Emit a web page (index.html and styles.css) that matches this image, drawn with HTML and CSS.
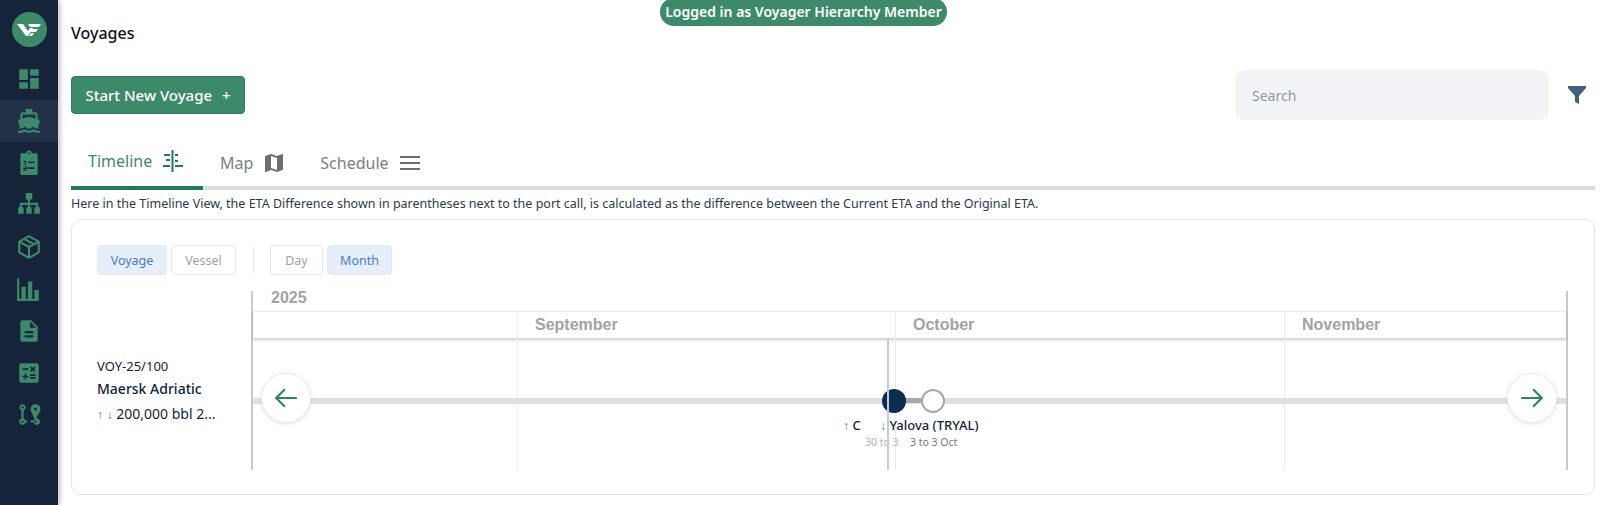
FILE: index.html
```html
<!DOCTYPE html>
<html lang="en">
<head>
  <meta charset="UTF-8">
  <title>Voyages</title>
  <link rel="stylesheet" href="styles.css">
</head>
<body>
  <nav class="sidebar">
    <div class="logo">
      <svg width="24" height="16" viewBox="0 0 24 16"><path fill="#fff" d="M0 2h6l5 7 2-3 3 0-5 8H9zM11 2h13l-2 3H13zM15 7h6l-2 3h-6zM14 11h3l-2 3h-3z"/></svg>
    </div>
    <a class="nav-item"><svg viewBox="0 0 24 24" width="26" height="26"><path d="M3 13h8V3H3v10zm0 8h8v-6H3v6zm10 0h8V11h-8v10zm0-18v6h8V3h-8z"/></svg></a>
    <a class="nav-item active"><svg viewBox="0 0 24 24" width="26" height="26"><path d="M20 21c-1.39 0-2.78-.47-4-1.32-2.44 1.71-5.56 1.71-8 0C6.78 20.53 5.39 21 4 21H2v2h2c1.38 0 2.74-.35 4-.99 2.52 1.29 5.48 1.29 8 0 1.26.65 2.62.99 4 .99h2v-2h-2zM3.95 19H4c1.6 0 3.02-.88 4-2 .98 1.12 2.4 2 4 2s3.02-.88 4-2c.98 1.12 2.4 2 4 2h.05l1.89-6.68c.08-.26.06-.54-.06-.78s-.34-.42-.6-.5L20 10.62V6c0-1.1-.9-2-2-2h-3V1H9v3H6c-1.1 0-2 .9-2 2v4.62l-1.29.42c-.26.08-.48.26-.6.5s-.15.52-.06.78L3.95 19zM6 6h12v3.97L12 8 6 9.97V6z"/></svg></a>
    <a class="nav-item"><svg viewBox="0 0 24 24" width="26" height="26"><path fill-rule="evenodd" d="M5 3h4.5a2.5 2.5 0 0 1 5 0H19a1 1 0 0 1 1 1v18a1 1 0 0 1-1 1H5a1 1 0 0 1-1-1V4a1 1 0 0 1 1-1zm6.2 0a.8.8 0 1 0 1.6 0 .8.8 0 0 0-1.6 0zM7 10v1h1v3h1v-4zm4 .5V12h6v-1.500zM7 15.500V16h2v.5H7V19h3v-1H8v-.5h2V15zm4 .5v1.500h6V16z"/></svg></a>
    <a class="nav-item"><svg viewBox="0 0 24 24" width="26" height="26"><path d="M9 1h6v6h-2v3h7.500v4H22v6h-5v-6h1.500v-2H13v2h1.500v6h-5v-6H11v-2H5.500v2H7v6H2v-6h1.500v-4H11V7H9z"/></svg></a>
    <a class="nav-item"><svg viewBox="0 0 24 24" width="26" height="26"><path fill="none" stroke="#3d8a6a" stroke-width="2" stroke-linejoin="round" d="M12 2l9 5v10l-9 5-9-5V7zM3 7l9 5 9-5M12 12v10M7.500 4.500l9 5"/></svg></a>
    <a class="nav-item"><svg viewBox="0 0 24 24" width="26" height="26"><path d="M1 2h2v19h2V10h4v11h2V5h4v16h2v-8h4v10H1z"/></svg></a>
    <a class="nav-item"><svg viewBox="0 0 24 24" width="26" height="26"><path d="M14 2H6c-1.100 0-2 .9-2 2v16c0 1.100.9 2 2 2h12c1.100 0 2-.9 2-2V8l-6-6zm2 16H8v-2h8v2zm0-4H8v-2h8v2zm-3-5V3.500L18.500 9H13z"/></svg></a>
    <a class="nav-item"><svg viewBox="0 0 24 24" width="26" height="26"><path d="M19 3H5c-1.100 0-2 .9-2 2v14c0 1.100.9 2 2 2h14c1.100 0 2-.9 2-2V5c0-1.100-.9-2-2-2zm-5.970 4.060L14.090 6l1.410 1.410L16.910 6l1.060 1.060-1.410 1.410 1.410 1.410-1.060 1.060-1.410-1.400-1.410 1.410-1.060-1.060 1.410-1.410-1.410-1.420zm-6.780.66h5v1.500h-5v-1.500zM11.500 16h-2v2H8v-2H6v-1.500h2v-2h1.500v2h2V16zm6.500 1.250h-5v-1.500h5v1.500zm0-2.500h-5v-1.500h5v1.500z"/></svg></a>
    <a class="nav-item"><svg viewBox="0 0 24 24" width="26" height="26"><path fill-rule="evenodd" d="M6 2a3 3 0 0 1 1 5.800V15.200A3 3 0 0 1 8.800 17h1.700v2H8.800A3 3 0 1 1 5 15.200V7.800A3 3 0 0 1 6 2zm0 2a1 1 0 1 0 0 2 1 1 0 0 0 0-2zm0 13a1 1 0 1 0 0 2 1 1 0 0 0 0-2zM18 2a4.500 4.500 0 0 1 4.500 4.500c0 3-3.200 6-3.500 8.700a3 3 0 1 1-2.800 3.800h-2.700v-2h2.700a3 3 0 0 1 .8-1.600C16.200 12.500 13.500 9.500 13.500 6.500A4.500 4.500 0 0 1 18 2zm0 3a1.500 1.500 0 1 0 0 3 1.500 1.500 0 0 0 0-3zm0 12a1 1 0 1 0 0 2 1 1 0 0 0 0-2z"/></svg></a>
  </nav>

  <main class="content">
    <div class="login-pill">Logged in as Voyager Hierarchy Member</div>
    <h1 class="page-title">Voyages</h1>

    <div class="actions">
      <button class="start-btn">Start New Voyage <span class="plus">+</span></button>
      <div class="search-wrap">
        <input class="search" type="text" placeholder="Search">
        <svg class="filter" viewBox="0 0 20 20" width="20" height="20"><path d="M1 1h18v2l-7 8v8l-4-2v-6L1 3z"/></svg>
      </div>
    </div>

    <div class="tabs">
      <a class="tab selected">Timeline
        <svg viewBox="0 0 24 24" width="24" height="24"><path d="M10.500 1h2v22h-2zM3 5h6v2H3zM14 5h3v2h-3zM5 10h4v2H5zM14 11h3v2h-3zM14 16h8v2h-8zM2 16h7v2H2z"/></svg>
      </a>
      <a class="tab">Map
        <svg viewBox="0 0 24 24" width="24" height="24"><path d="M20.500 3l-.16.030L15 5.100 9 3 3.360 4.900c-.21.070-.36.250-.36.480V20.500c0 .28.220.5.5.5l.16-.030L9 18.900l6 2.100 5.640-1.900c.21-.070.36-.250.36-.480V3.500c0-.28-.220-.5-.5-.5zM15 19l-6-2.110V5l6 2.110V19z"/></svg>
      </a>
      <a class="tab">Schedule
        <svg viewBox="0 0 24 24" width="24" height="24"><path d="M2 5h20v2H2zM2 11h20v2H2zM2 17h20v2H2z"/></svg>
      </a>
    </div>

    <p class="note">Here in the Timeline View, the ETA Difference shown in parentheses next to the port call, is calculated as the difference between the Current ETA and the Original ETA.</p>

    <section class="card">
      <div class="toolbar">
        <button class="toggle on toggle-voyage">Voyage</button>
        <button class="toggle toggle-vessel">Vessel</button>
        <span class="divider"></span>
        <button class="toggle toggle-day">Day</button>
        <button class="toggle on toggle-month">Month</button>
      </div>

      <div class="timeline-row">
        <div class="voyage-info">
          <div class="voy-code">VOY-25/100</div>
          <div class="voy-name">Maersk Adriatic</div>
          <div class="voy-cargo"><span class="arrow">↑</span> <span class="arrow">↓</span> 200,000 bbl 2...</div>
        </div>

        <div class="chart">
          <div class="year">2025</div>
          <div class="months">
            <div class="month m0"></div>
            <div class="month m1">September</div>
            <div class="month m2">October</div>
            <div class="month m3">November</div>
          </div>
          <div class="grid">
            <div class="col m0"></div>
            <div class="col m1"></div>
            <div class="col m2"></div>
            <div class="col m3"></div>
          </div>

          <div class="track"></div>
          <div class="today"></div>
          <div class="connector"></div>
          <div class="dot dot-past"></div>
          <div class="dot dot-next"></div>

          <div class="port port-a"><span class="arrow">↑</span> C</div>
          <div class="port port-b"><span class="arrow">↓</span> Yalova (TRYAL)</div>
          <div class="dates dates-a">30 to 3</div>
          <div class="dates dates-b">3 to 3 Oct</div>

          <button class="nav-arrow arrow-left"><svg viewBox="0 0 24 24" width="26" height="26"><path d="M22 12H3M11 4l-8 8 8 8"/></svg></button>
          <button class="nav-arrow arrow-right"><svg viewBox="0 0 24 24" width="26" height="26"><path d="M2 12h19M13 4l8 8-8 8"/></svg></button>
        </div>
      </div>
    </section>
  </main>
</body>
</html>
```

FILE: styles.css
```css
* {
  box-sizing: border-box;
}

html, body {
  margin: 0;
  height: 505px;
  overflow: hidden;
}

body {
  display: flex;
  font-family: "Noto Sans", Arial, sans-serif;
  background-color: white;
  color: #16243a;
}

/* Barra lateral */
.sidebar {
  width: 58px;
  flex-shrink: 0;
  background-color: #16243a;
  box-shadow: 2px 0 5px rgba(0, 0, 0, 0.25);
  display: flex;
  flex-direction: column;
  align-items: center;
  padding-top: 12px;
}

.logo {
  width: 35px;
  height: 35px;
  border-radius: 50%;
  background-color: #3d8a6a;
  display: flex;
  align-items: center;
  justify-content: center;
  margin-bottom: 11px;
}

.nav-item {
  width: 100%;
  height: 42px;
  display: flex;
  align-items: center;
  justify-content: center;
  flex-shrink: 0;
}

.nav-item svg {
  fill: #3d8a6a;
}

.nav-item.active {
  background-color: #233148;
}

/* Conteudo */
.content {
  flex: 1;
  min-width: 0;
  padding: 0 5px 0 13px;
}

.login-pill {
  position: absolute;
  left: 660px;
  top: -2px;
  width: 287px;
  height: 28px;
  border-radius: 14px;
  background-color: #3d8a6a;
  color: white;
  font-size: 14px;
  font-weight: 600;
  text-align: center;
  line-height: 28px;
}

.page-title {
  margin: 0;
  padding-top: 22px;
  height: 70px;
  font-size: 16px;
  line-height: 22px;
  font-weight: 500;
  color: #0c1420;
}

.actions {
  display: flex;
  justify-content: space-between;
  align-items: center;
  height: 50px;
}

.start-btn {
  width: 174px;
  height: 38px;
  margin-top: 0;
  border: 1px solid #35795d;
  border-radius: 4px;
  background-color: #3d8a6a;
  color: white;
  font-family: inherit;
  font-size: 15px;
  font-weight: 500;
}

.plus {
  margin-left: 6px;
}

.search-wrap {
  display: flex;
  align-items: center;
  gap: 18px;
  padding-right: 8px;
}

.search {
  width: 314px;
  height: 50px;
  border: none;
  border-radius: 10px;
  background-color: #f2f3f7;
  padding: 0 17px;
  font-family: inherit;
  font-size: 14px;
}

.search::placeholder {
  color: #8d99a8;
}

.filter {
  fill: #43607c;
}

.tabs {
  display: flex;
  height: 70px;
  padding-top: 22px;
  border-bottom: 4px solid #dcdcdc;
}

.tab {
  display: flex;
  align-items: center;
  gap: 9px;
  height: 48px;
  padding: 0 17px 6px;
  margin-bottom: -4px;
  font-size: 16px;
  color: #75808a;
}

.tab svg {
  fill: #6e6e6e;
}

.tab.selected {
  width: 132px;
  color: #3d8a6a;
  border-bottom: 4px solid #217a59;
}

.tab.selected svg {
  fill: #217a59;
}

.note {
  margin: 0;
  height: 29px;
  padding-top: 5px;
  font-size: 12.5px;
  line-height: 18px;
  color: #2c3a4b;
  white-space: nowrap;
}

.card {
  height: 276px;
  border: 1px solid #e3e8ef;
  border-radius: 10px;
  padding: 25px 26px 0 25px;
}

.toolbar {
  display: flex;
  align-items: center;
  gap: 4px;
  height: 30px;
}

.toggle {
  height: 30px;
  padding: 0;
  border: 1px solid #e6e6e6;
  border-radius: 4px;
  background-color: white;
  color: #a3a3a3;
  font-family: inherit;
  font-size: 12.5px;
}

.toggle.on {
  background-color: #e6eff9;
  border-color: #e0ebf7;
  color: #4a7bc8;
}

.toggle-voyage { width: 70px; }
.toggle-vessel { width: 65px; }
.toggle-day { width: 53px; }
.toggle-month { width: 65px; }

.divider {
  width: 1px;
  height: 26px;
  margin: 0 12px 0 13px;
  background-color: #e6e6e6;
}

.timeline-row {
  display: flex;
  margin-top: 16px;
}

.voyage-info {
  width: 154px;
  flex-shrink: 0;
  padding-top: 65px;
}

.voy-code {
  font-size: 13px;
  line-height: 20px;
}

.voy-name {
  margin-top: 2px;
  font-size: 14px;
  line-height: 22px;
  font-weight: 500;
  color: #0c1f38;
}

.voy-cargo {
  margin-top: 3px;
  font-size: 14px;
  line-height: 22px;
  white-space: nowrap;
}

.arrow {
  color: #3d8a6a;
  font-size: 12px;
}

/* Linha do tempo */
.chart {
  position: relative;
  width: 1318px;
  height: 179px;
  border-left: 2px solid #c8c8c8;
  border-right: 2px solid #c8c8c8;
  display: flex;
  flex-direction: column;
}

.year {
  height: 20px;
  padding-left: 18px;
  font-family: "Liberation Sans", Arial, sans-serif;
  font-size: 16px;
  font-weight: 700;
  line-height: 13px;
  color: #a3a3a3;
}

.months {
  display: flex;
  height: 27px;
  border-top: 1px solid #ececec;
  box-shadow: 0 2px 3px rgba(0, 0, 0, 0.2);
}

.month {
  padding-left: 17px;
  border-left: 1px solid #ececec;
  font-family: "Liberation Sans", Arial, sans-serif;
  font-size: 16px;
  font-weight: 700;
  line-height: 26px;
  color: #a3a3a3;
}

.m0 { width: 264px; border-left: none; }
.m1 { width: 378px; }
.m2 { width: 389px; }
.m3 { flex: 1; }

.grid {
  display: flex;
  flex: 1;
}

.col {
  border-left: 1px solid #ececec;
}

.col.m0 {
  border-left: none;
}

.track {
  position: absolute;
  left: 0;
  right: 0;
  top: 107px;
  height: 6px;
  background-color: #e0e0e0;
}

.today {
  position: absolute;
  left: 634px;
  top: 47px;
  bottom: 0;
  width: 2px;
  background-color: #b9cfea;
  z-index: 2;
}

.connector {
  position: absolute;
  left: 650px;
  top: 107px;
  width: 20px;
  height: 5px;
  background-color: #a8a8a8;
}

.dot {
  position: absolute;
  top: 98px;
  width: 24px;
  height: 24px;
  border-radius: 50%;
}

.dot-past {
  left: 629px;
  background-color: #0d2c4e;
}

.dot-next {
  left: 668px;
  background-color: white;
  border: 2px solid #a8a8a8;
}

.port {
  position: absolute;
  top: 125px;
  font-size: 13px;
  line-height: 18px;
  font-weight: 500;
  color: #16243a;
  white-space: nowrap;
}

.port-a { left: 590px; }
.port-b { left: 627px; }

.dates {
  position: absolute;
  top: 144px;
  font-size: 10.500px;
  line-height: 14px;
  white-space: nowrap;
}

.dates-a { left: 612px; color: #b5b5b5; }
.dates-b { left: 657px; color: #777; }

.nav-arrow {
  position: absolute;
  top: 82px;
  width: 50px;
  height: 50px;
  padding: 0;
  border: 1px solid #ececec;
  border-radius: 50%;
  background-color: white;
  box-shadow: 0 1px 4px rgba(0, 0, 0, 0.12);
  display: flex;
  align-items: center;
  justify-content: center;
  z-index: 3;
}

.nav-arrow svg {
  fill: none;
  stroke: #2f8467;
  stroke-width: 2;
}

.arrow-left { left: 8px; }
.arrow-right { right: 9px; }
```
